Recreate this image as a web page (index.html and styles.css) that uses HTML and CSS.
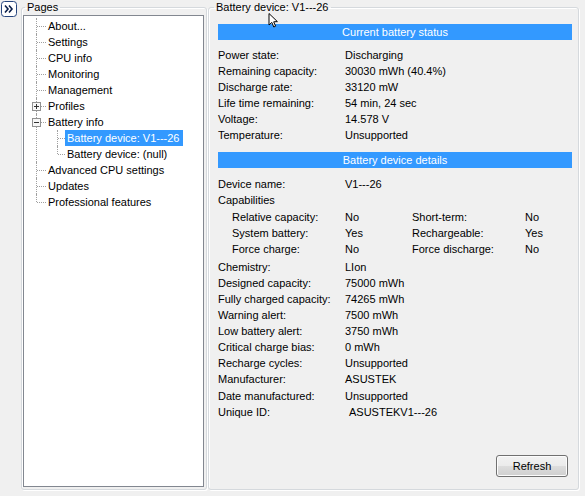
FILE: index.html
```html
<!DOCTYPE html>
<html lang="en">
<head>
    <meta charset="UTF-8">
    <title>Battery info</title>
    <link rel="stylesheet" href="styles.css">
</head>
<body>
    <div class="window">
        <button class="collapse-btn" title="Hide pages">
            <svg width="16" height="16" viewBox="0 0 16 16">
                <rect x="0.5" y="0.5" width="15" height="15" rx="3" fill="#fff" stroke="#27467e"/>
                <path d="M4 4.5 L7 8 L4 11.5 M8 4.5 L11 8 L8 11.5" fill="none" stroke="#0b1f4a" stroke-width="1.6"/>
            </svg>
        </button>

        <fieldset class="group pages">
            <legend>Pages</legend>
            <div class="tree-box">
                <ul class="tree">
                    <li><span class="label">About...</span></li>
                    <li><span class="label">Settings</span></li>
                    <li><span class="label">CPU info</span></li>
                    <li><span class="label">Monitoring</span></li>
                    <li><span class="label">Management</span></li>
                    <li>
                        <svg class="toggler" width="9" height="9" viewBox="0 0 9 9">
                            <rect x="0.5" y="0.5" width="8" height="8" fill="#f7f7f7" stroke="#919191"/>
                            <path d="M2 4.5 H7 M4.5 2 V7" stroke="#333" stroke-width="1"/>
                        </svg>
                        <span class="label">Profiles</span>
                    </li>
                    <li>
                        <svg class="toggler" width="9" height="9" viewBox="0 0 9 9">
                            <rect x="0.5" y="0.5" width="8" height="8" fill="#f7f7f7" stroke="#919191"/>
                            <path d="M2 4.5 H7" stroke="#333" stroke-width="1"/>
                        </svg>
                        <span class="label">Battery info</span>
                        <ul class="tree">
                            <li><span class="label selected">Battery device: V1---26</span></li>
                            <li><span class="label">Battery device: (null)</span></li>
                        </ul>
                    </li>
                    <li><span class="label">Advanced CPU settings</span></li>
                    <li><span class="label">Updates</span></li>
                    <li><span class="label">Professional features</span></li>
                </ul>
            </div>
        </fieldset>

        <fieldset class="group device">
            <legend>Battery device: V1---26</legend>
            <svg class="cursor" width="12" height="16" viewBox="0 0 12 16">
                <path d="M1 0.5 L1 12 L3.8 9.4 L5.8 14 L7.6 13.2 L5.7 8.8 L9.4 8.6 Z" fill="#fff" stroke="#000" stroke-width="1"/>
            </svg>
            <div class="device-body">
                <div class="section-head">Current battery status</div>
                <div class="info">
                    <span>Power state:</span><span>Discharging</span>
                    <span>Remaining capacity:</span><span>30030 mWh (40.4%)</span>
                    <span>Discharge rate:</span><span>33120 mW</span>
                    <span>Life time remaining:</span><span>54 min, 24 sec</span>
                    <span>Voltage:</span><span>14.578 V</span>
                    <span>Temperature:</span><span>Unsupported</span>
                </div>

                <div class="section-head second">Battery device details</div>
                <div class="info">
                    <span>Device name:</span><span>V1---26</span>
                    <span class="full">Capabilities</span>
                </div>
                <div class="caps">
                    <span>Relative capacity:</span><span>No</span><span>Short-term:</span><span>No</span>
                    <span>System battery:</span><span>Yes</span><span>Rechargeable:</span><span>Yes</span>
                    <span>Force charge:</span><span>No</span><span>Force discharge:</span><span>No</span>
                </div>
                <div class="info chem">
                    <span>Chemistry:</span><span>LIon</span>
                    <span>Designed capacity:</span><span>75000 mWh</span>
                    <span>Fully charged capacity:</span><span>74265 mWh</span>
                    <span>Warning alert:</span><span>7500 mWh</span>
                    <span>Low battery alert:</span><span>3750 mWh</span>
                    <span>Critical charge bias:</span><span>0 mWh</span>
                    <span>Recharge cycles:</span><span>Unsupported</span>
                    <span>Manufacturer:</span><span>ASUSTEK</span>
                </div>
                <div class="info late">
                    <span>Date manufactured:</span><span>Unsupported</span>
                    <span>Unique ID:</span><span class="uid">ASUSTEKV1---26</span>
                </div>

                <div class="actions">
                    <button class="btn">Refresh</button>
                </div>
            </div>
        </fieldset>
    </div>
</body>
</html>
```

FILE: styles.css
```css
body {
    margin: 0;
    background: #f0f0f0;
    font-family: "Liberation Sans", Arial, sans-serif;
    font-size: 11px;
    color: #000;
    width: 585px;
    height: 496px;
    overflow: hidden;
}
.window {
    display: flex;
    align-items: flex-start;
    padding-left: 1px;
}
.collapse-btn {
    margin: 1px 4px 0 0;
    padding: 0;
    border: none;
    background: none;
    width: 16px;
    height: 16px;
    display: block;
}
.collapse-btn svg {
    display: block;
}

/* group boxes */
.group {
    margin: 0;
    padding: 0;
    height: 490px;
    box-sizing: border-box;
    border: 1px solid #d5d9dd;
    border-radius: 3px;
    box-shadow: inset 1px 1px 0 #fff, 1px 1px 0 #fff;
    min-width: 0;
    position: relative;
}
.group legend {
    padding: 0 2px;
    line-height: 14px;
    margin-left: 2px;
}
.pages {
    width: 186px;
    padding: 1px 2px 2px 1px;
}
.device {
    width: 371px;
    margin-left: 1px;
}
.device legend {
    margin-left: 5px;
}
.cursor {
    position: absolute;
    left: 59px;
    top: -1px;
}

/* tree view */
.tree-box {
    width: 181px;
    height: 472px;
    box-sizing: border-box;
    background: #fff;
    border: 1px solid #828790;
    padding-top: 2px;
}
.tree {
    list-style: none;
    margin: 0;
    padding: 0;
}
.tree li {
    position: relative;
    padding-left: 22px;
    line-height: 16px;
}
.tree li::before {
    content: '';
    position: absolute;
    left: 12px;
    top: 0;
    bottom: 0;
    border-left: 1px dotted #a0a0a0;
}
.tree li:last-child::before {
    bottom: auto;
    height: 8px;
}
.tree li::after {
    content: '';
    position: absolute;
    left: 13px;
    top: 8px;
    width: 9px;
    border-top: 1px dotted #a0a0a0;
}
.tree .tree {
    margin-left: -1px;
}
.tree .tree li {
    padding-left: 20px;
}
.tree .tree li::after {
    width: 7px;
}
.tree .label {
    display: inline-block;
    padding: 0 2px;
    height: 16px;
    white-space: nowrap;
}
.tree .label.selected {
    background: #3399ff;
    color: #fff;
    padding-right: 3px;
}
.toggler {
    position: absolute;
    left: 8px;
    top: 4px;
    z-index: 1;
}

/* device details */
.device-body {
    height: 474px;
    box-sizing: border-box;
    padding: 10px 6px 11px 9px;
    display: flex;
    flex-direction: column;
}
.section-head {
    background: #3399ff;
    color: #fff;
    text-align: center;
    height: 16px;
    line-height: 16px;
    margin-bottom: 7px;
}
.section-head.second {
    margin-top: 9px;
    margin-bottom: 8px;
}
.info {
    display: grid;
    grid-template-columns: 127px 1fr;
    line-height: 16px;
}
.info .full {
    grid-column: 1 / 3;
}
.caps {
    display: grid;
    grid-template-columns: 113px 67px 113px 1fr;
    padding-left: 14px;
    margin-top: 1px;
    line-height: 16px;
}
.chem {
    margin-top: 2px;
}
.late {
    margin-top: 1px;
}
.uid {
    padding-left: 4px;
}
.actions {
    margin-top: auto;
    display: flex;
    justify-content: flex-end;
    padding-right: 4px;
}
.btn {
    width: 72px;
    height: 22px;
    font-family: inherit;
    font-size: 11px;
    color: #000;
    border: 1px solid #707070;
    border-radius: 3px;
    background: linear-gradient(#f2f2f2 0%, #ebebeb 50%, #dddddd 51%, #cfcfcf 100%);
    box-shadow: inset 0 0 0 1px #fcfcfc;
    padding: 0;
}
```
